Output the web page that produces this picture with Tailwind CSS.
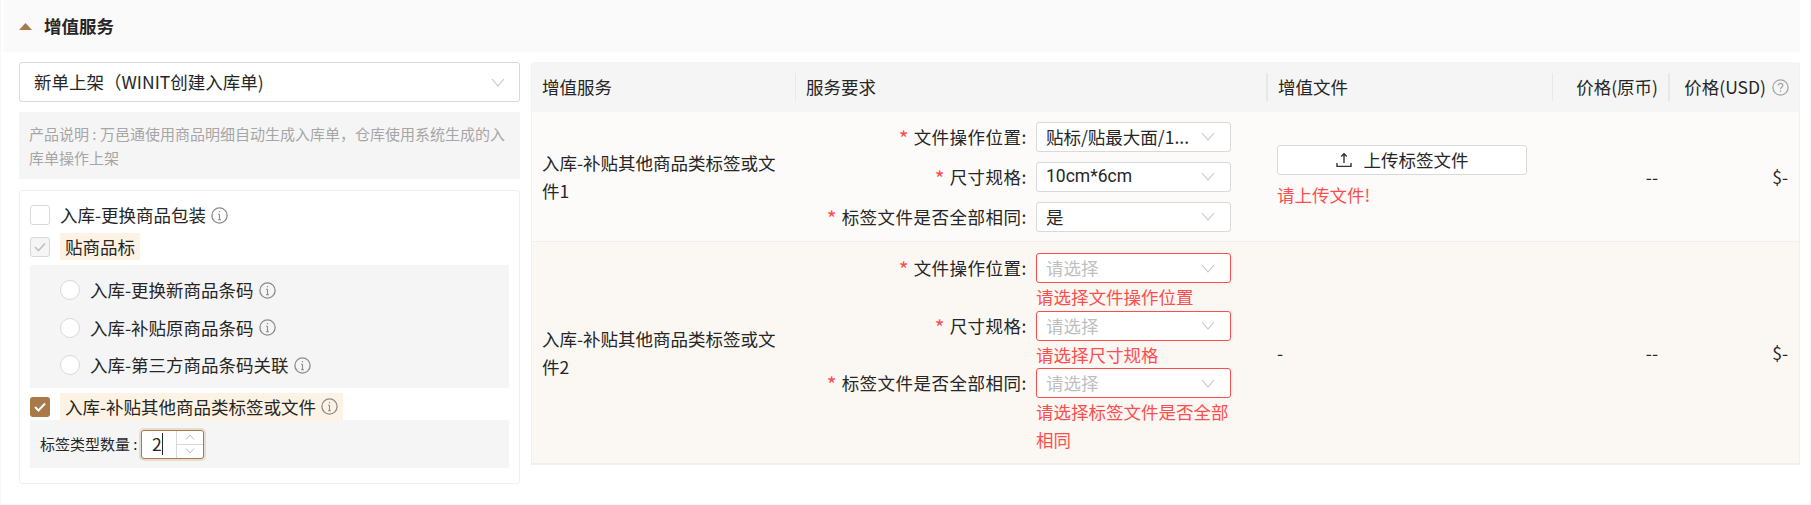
<!DOCTYPE html>
<html lang="zh-CN">
  <head>
    <meta charset="UTF-8" />
    <title>增值服务</title>
    <script src="https://cdn.jsdelivr.net/npm/@tailwindcss/browser@4"></script>
  </head>
  <body class="bg-white text-[#262626] text-[17.5px] leading-[27.5px] font-['Noto_Sans_CJK_SC','Noto_Sans',sans-serif]">
    <div class="h-[505px] w-[1811px] overflow-hidden border-x border-b border-[#f7f7f7] pl-[3px] pr-[10px]">
      <!-- Section title -->
      <div class="flex h-[52px] items-center bg-[#fafafa] pl-[15px]">
        <svg class="h-[7px] w-[13px]" viewBox="0 0 13 7"><path d="M6.5 0L13 7H0z" fill="#a9794a" /></svg>
        <h2 class="ml-[12px] text-[17.5px] font-bold">增值服务</h2>
      </div>

      <div class="flex items-start pl-[15px] pt-[10px]">
        <!-- Left column -->
        <div class="w-[501px]">
          <div class="flex h-[40px] items-center justify-between rounded-[3px] border border-[#d9d9d9] bg-white pl-[14px] pr-[14px]">
            <span>新单上架（WINIT创建入库单)</span>
            <svg class="h-[9px] w-[14px]" viewBox="0 0 14 9" fill="none" stroke="#c4c4c4" stroke-width="1.1"><path d="M1 1l6 7 6-7" /></svg>
          </div>
          <p class="mt-[10px] h-[67px] bg-[#f5f5f5] px-[10px] py-[10px] text-[15px] leading-[24px] text-[#a6a6a6]">产品说明 : 万邑通使用商品明细自动生成入库单，仓库使用系统生成的入库单操作上架</p>

          <div class="mt-[11px] h-[294px] rounded-[3px] border border-[#f0f0f0] px-[10px] pt-[14px]">
            <label class="flex h-[20px] items-center">
              <span class="h-[20px] w-[20px] rounded-[3px] border border-[#d9d9d9] bg-white"></span>
              <span class="ml-[10px]">入库-更换商品包装</span>
              <svg class="ml-[5px] h-[17px] w-[17px]" viewBox="0 0 17 17" fill="none" stroke="#8c8c8c"><circle cx="8.5" cy="8.5" r="7.6" stroke-width="1.3" /><path d="M8.5 7.2v5.6M7 7.2h1.5M7 12.8h3M8.5 4v1.2" stroke-width="1.1" /></svg>
            </label>
            <label class="mt-[8px] flex h-[27px] items-center">
              <span class="flex h-[20px] w-[20px] items-center justify-center rounded-[3px] border border-[#d9d9d9] bg-[#f5f5f5]">
                <svg class="h-[10px] w-[12px]" viewBox="0 0 12 10" fill="none" stroke="#bfbfbf" stroke-width="1.6"><path d="M1 5l3.5 3.5L11 1.5" /></svg>
              </span>
              <span class="ml-[10px] bg-[#fdf3e4] px-[5px]">贴商品标</span>
            </label>
            <div class="mt-[5px] flex h-[123px] flex-col gap-[17.5px] bg-[#f5f5f5] pl-[30px] pt-[15px]">
              <label class="flex h-[20px] items-center">
                <span class="h-[20px] w-[20px] rounded-full border border-[#d9d9d9] bg-white"></span>
                <span class="ml-[10px]">入库-更换新商品条码</span>
                <svg class="ml-[5px] h-[17px] w-[17px]" viewBox="0 0 17 17" fill="none" stroke="#8c8c8c"><circle cx="8.5" cy="8.5" r="7.6" stroke-width="1.3" /><path d="M8.5 7.2v5.6M7 7.2h1.5M7 12.8h3M8.5 4v1.2" stroke-width="1.1" /></svg>
              </label>
              <label class="flex h-[20px] items-center">
                <span class="h-[20px] w-[20px] rounded-full border border-[#d9d9d9] bg-white"></span>
                <span class="ml-[10px]">入库-补贴原商品条码</span>
                <svg class="ml-[5px] h-[17px] w-[17px]" viewBox="0 0 17 17" fill="none" stroke="#8c8c8c"><circle cx="8.5" cy="8.5" r="7.6" stroke-width="1.3" /><path d="M8.5 7.2v5.6M7 7.2h1.5M7 12.8h3M8.5 4v1.2" stroke-width="1.1" /></svg>
              </label>
              <label class="flex h-[20px] items-center">
                <span class="h-[20px] w-[20px] rounded-full border border-[#d9d9d9] bg-white"></span>
                <span class="ml-[10px]">入库-第三方商品条码关联</span>
                <svg class="ml-[5px] h-[17px] w-[17px]" viewBox="0 0 17 17" fill="none" stroke="#8c8c8c"><circle cx="8.5" cy="8.5" r="7.6" stroke-width="1.3" /><path d="M8.5 7.2v5.6M7 7.2h1.5M7 12.8h3M8.5 4v1.2" stroke-width="1.1" /></svg>
              </label>
            </div>
            <label class="mt-[5px] flex h-[27px] items-center">
              <span class="flex h-[20px] w-[20px] items-center justify-center rounded-[3px] bg-[#a9794a]">
                <svg class="h-[10px] w-[12px]" viewBox="0 0 12 10" fill="none" stroke="#fff" stroke-width="2"><path d="M1 5l3.5 3.5L11 1.5" /></svg>
              </span>
              <span class="ml-[10px] flex h-[27px] items-center bg-[#fdf3e4] px-[5px]">入库-补贴其他商品类标签或文件
                <svg class="ml-[5px] h-[17px] w-[17px]" viewBox="0 0 17 17" fill="none" stroke="#8c8c8c"><circle cx="8.5" cy="8.5" r="7.6" stroke-width="1.3" /><path d="M8.5 7.2v5.6M7 7.2h1.5M7 12.8h3M8.5 4v1.2" stroke-width="1.1" /></svg>
              </span>
            </label>
            <div class="flex h-[48px] items-center bg-[#f5f5f5] pl-[10px] text-[15px]">
              <span class="w-[96px] whitespace-nowrap">标签类型数量 :</span>
              <div class="ml-[5px] flex h-[29px] w-[63px] rounded-[3px] border border-[#a9794a] bg-white shadow-[0_0_0_2px_rgba(169,121,74,0.2)]">
                <span class="flex w-[34px] items-center pl-[10px] text-[17.5px]">2<span class="h-[22px] w-px bg-[#262626]"></span></span>
                <div class="flex flex-1 flex-col border-l border-[#d9d9d9]">
                  <span class="flex flex-1 items-center justify-center border-b border-[#d9d9d9]">
                    <svg class="h-[6px] w-[10px]" viewBox="0 0 10 6" fill="none" stroke="#bfbfbf"><path d="M1 5.5L5 1l4 4.5" /></svg>
                  </span>
                  <span class="flex flex-1 items-center justify-center">
                    <svg class="h-[6px] w-[10px]" viewBox="0 0 10 6" fill="none" stroke="#bfbfbf"><path d="M1 .5L5 5l4-4.5" /></svg>
                  </span>
                </div>
              </div>
            </div>
          </div>
        </div>

        <!-- Services table -->
        <div class="ml-[11px] w-[1269px] overflow-hidden rounded-t-[3px] border-x border-b-2 border-[#f0f0f0]">
          <div class="grid h-[50px] grid-cols-[263px_471px_286px_116px_131px] items-center bg-[#f5f5f5]">
            <div class="pl-[10px]">增值服务</div>
            <div class="flex h-[28px] items-center border-l border-[#e8e8e8] pl-[10px]">服务要求</div>
            <div class="flex h-[28px] items-center border-l-2 border-[#e8e8e8] pl-[10px]">增值文件</div>
            <div class="flex h-[28px] items-center justify-end border-l border-[#e8e8e8] pr-[10px]">价格(原币)</div>
            <div class="flex h-[28px] items-center justify-end border-l-2 border-[#e8e8e8] pr-[10px]">价格(USD)
              <svg class="ml-[6px] h-[17px] w-[17px]" viewBox="0 0 17 17" fill="none" stroke="#a6a6a6"><circle cx="8.5" cy="8.5" r="7.6" stroke-width="1.3" /><path d="M6.2 6.6c0-3 4.6-3 4.6 0 0 1.8-2.3 1.7-2.3 3.6M8.5 11.6v1.4" stroke-width="1.2" /></svg>
            </div>
          </div>

          <!-- Row 1 -->
          <div class="grid h-[130px] grid-cols-[263px_471px_286px_116px_131px] items-center border-b border-[#f0f0f0] bg-[#fdfbf9]">
            <div class="pl-[10px] pr-[16px]">入库-补贴其他商品类标签或文件1</div>
            <div class="flex flex-col gap-[10px]">
              <div class="flex h-[30px] items-center justify-end pr-[35px]">
                <span class="mr-[5px] translate-y-[2px] text-[21px] text-[#ff4d4f]">*</span><span class="tracking-[0.5px]">文件操作位置:</span>
                <div class="ml-[9px] flex h-[30px] w-[195px] items-center justify-between rounded-[3px] border border-[#d9d9d9] bg-white pl-[9px] pr-[15px]">
                  <span>贴标/贴最大面/1...</span>
                  <svg class="h-[9px] w-[14px]" viewBox="0 0 14 9" fill="none" stroke="#c4c4c4" stroke-width="1.1"><path d="M1 1l6 7 6-7" /></svg>
                </div>
              </div>
              <div class="flex h-[30px] items-center justify-end pr-[35px]">
                <span class="mr-[5px] translate-y-[2px] text-[21px] text-[#ff4d4f]">*</span><span class="tracking-[0.5px]">尺寸规格:</span>
                <div class="ml-[9px] flex h-[30px] w-[195px] items-center justify-between rounded-[3px] border border-[#d9d9d9] bg-white pl-[9px] pr-[15px]">
                  <span class="font-['Roboto','Noto_Sans',sans-serif]">10cm*6cm</span>
                  <svg class="h-[9px] w-[14px]" viewBox="0 0 14 9" fill="none" stroke="#c4c4c4" stroke-width="1.1"><path d="M1 1l6 7 6-7" /></svg>
                </div>
              </div>
              <div class="flex h-[30px] items-center justify-end pr-[35px]">
                <span class="mr-[5px] translate-y-[2px] text-[21px] text-[#ff4d4f]">*</span><span class="tracking-[0.5px]">标签文件是否全部相同:</span>
                <div class="ml-[9px] flex h-[30px] w-[195px] items-center justify-between rounded-[3px] border border-[#d9d9d9] bg-white pl-[9px] pr-[15px]">
                  <span>是</span>
                  <svg class="h-[9px] w-[14px]" viewBox="0 0 14 9" fill="none" stroke="#c4c4c4" stroke-width="1.1"><path d="M1 1l6 7 6-7" /></svg>
                </div>
              </div>
            </div>
            <div class="pl-[11px] pr-[25px]">
              <div class="flex h-[30px] items-center justify-center rounded-[3px] border border-[#d9d9d9] bg-white">
                <svg class="mr-[12px] h-[16px] w-[16px]" viewBox="0 0 16 16" fill="none" stroke="#333" stroke-width="1.4"><path d="M8 11V2M5.2 4.6L8 1.8l2.8 2.8M1 11v3.4h14V11" /></svg>
                上传标签文件
              </div>
              <div class="mt-[6px] text-[#ff4d4f]">请上传文件!</div>
            </div>
            <div class="pr-[10px] text-right">--</div>
            <div class="pr-[11px] text-right">$-</div>
          </div>

          <!-- Row 2 -->
          <div class="grid h-[221px] grid-cols-[263px_471px_286px_116px_131px] items-center bg-[#fbf8f4]">
            <div class="pl-[10px] pr-[16px]">入库-补贴其他商品类标签或文件2</div>
            <div class="flex h-full flex-col pt-[11px]">
              <div class="flex h-[30px] items-center justify-end pr-[35px]">
                <span class="mr-[5px] translate-y-[2px] text-[21px] text-[#ff4d4f]">*</span><span class="tracking-[0.5px]">文件操作位置:</span>
                <div class="ml-[9px] flex h-[30px] w-[195px] items-center justify-between rounded-[3px] border border-[#ff4d4f] bg-white pl-[9px] pr-[15px]">
                  <span class="text-[#bfbfbf]">请选择</span>
                  <svg class="h-[9px] w-[14px]" viewBox="0 0 14 9" fill="none" stroke="#c4c4c4" stroke-width="1.1"><path d="M1 1l6 7 6-7" /></svg>
                </div>
              </div>
              <div class="ml-[241px] w-[195px] text-[#ff4d4f]">请选择文件操作位置</div>
              <div class="flex h-[30px] items-center justify-end pr-[35px]">
                <span class="mr-[5px] translate-y-[2px] text-[21px] text-[#ff4d4f]">*</span><span class="tracking-[0.5px]">尺寸规格:</span>
                <div class="ml-[9px] flex h-[30px] w-[195px] items-center justify-between rounded-[3px] border border-[#ff4d4f] bg-white pl-[9px] pr-[15px]">
                  <span class="text-[#bfbfbf]">请选择</span>
                  <svg class="h-[9px] w-[14px]" viewBox="0 0 14 9" fill="none" stroke="#c4c4c4" stroke-width="1.1"><path d="M1 1l6 7 6-7" /></svg>
                </div>
              </div>
              <div class="ml-[241px] w-[195px] text-[#ff4d4f]">请选择尺寸规格</div>
              <div class="flex h-[30px] items-center justify-end pr-[35px]">
                <span class="mr-[5px] translate-y-[2px] text-[21px] text-[#ff4d4f]">*</span><span class="tracking-[0.5px]">标签文件是否全部相同:</span>
                <div class="ml-[9px] flex h-[30px] w-[195px] items-center justify-between rounded-[3px] border border-[#ff4d4f] bg-white pl-[9px] pr-[15px]">
                  <span class="text-[#bfbfbf]">请选择</span>
                  <svg class="h-[9px] w-[14px]" viewBox="0 0 14 9" fill="none" stroke="#c4c4c4" stroke-width="1.1"><path d="M1 1l6 7 6-7" /></svg>
                </div>
              </div>
              <div class="ml-[241px] w-[195px] text-[#ff4d4f]">请选择标签文件是否全部相同</div>
            </div>
            <div class="pl-[11px]">-</div>
            <div class="pr-[10px] text-right">--</div>
            <div class="pr-[11px] text-right">$-</div>
          </div>
        </div>
      </div>
    </div>
  </body>
</html>
